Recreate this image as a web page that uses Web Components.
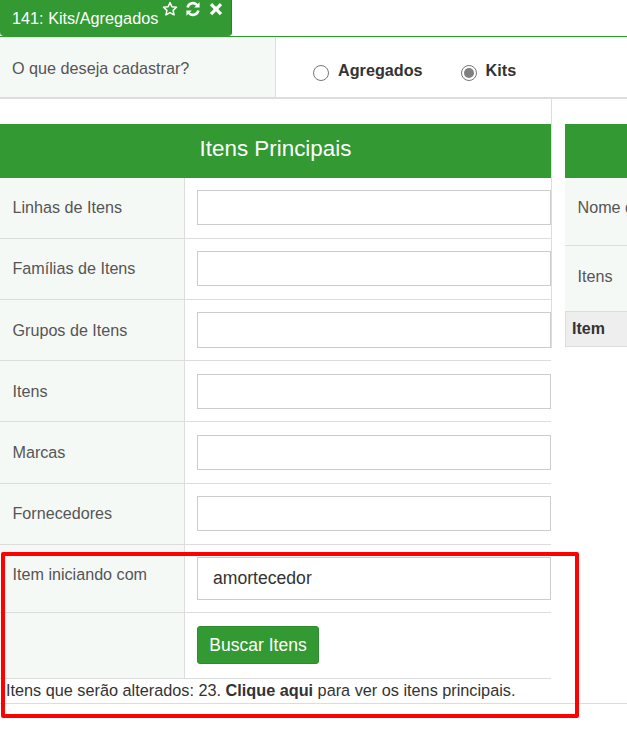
<!DOCTYPE html>
<html lang="pt"><head><meta charset="utf-8"><title>Kits/Agregados</title>
<style>
html,body{margin:0;padding:0;background:#fff;overflow:hidden;height:749px}
body{font:16px "Liberation Sans",Arial,sans-serif;color:#333;position:relative}
</style></head><body>
<kit-page></kit-page>
<script>
function el(name,html,css){
  customElements.define(name,class extends HTMLElement{
    connectedCallback(){ if(this.shadowRoot) return;
      const s=this.attachShadow({mode:'open'});
      const f=typeof html==='function'?html(this):html;
      s.innerHTML='<style>'+css+'</style>'+f;
    }
  });
}
el('kit-tab',`<span class="t">141: Kits/Agregados</span>
<span class="ic">
<svg width="16" height="16" viewBox="0 0 16 16"><path d="M8 1.6l1.9 4.2 4.6.5-3.4 3.1.95 4.5L8 11.6l-4.05 2.3.95-4.5L1.5 6.3l4.6-.5z" fill="none" stroke="#fff" stroke-width="1.5" stroke-linejoin="round"/></svg>
<svg width="16" height="16" viewBox="0 0 16 16"><path d="M2.6 6.6A5.6 5.6 0 0 1 12.4 4.2M13.4 9.4A5.6 5.6 0 0 1 3.6 11.8" fill="none" stroke="#fff" stroke-width="2.5"/><path d="M14.6 1.2v5.4H9.2zM1.4 14.8V9.4h5.4z" fill="#fff"/></svg>
<svg width="16" height="16" viewBox="0 0 16 16"><path d="M3 3.2l10 10M13 3.2l-10 10" fill="none" stroke="#fff" stroke-width="3.2"/></svg>
</span>`,`
:host{display:flex;width:232px;height:36px;box-sizing:border-box;background:#339933;color:#fff;border-radius:0 0 4px 4px;border-right:1px solid #2c7f2c;padding-left:12px;position:relative}
.t{font-size:16.25px;line-height:37px;white-space:nowrap}
.ic{display:flex;gap:7px;margin-left:4px;height:18px;align-items:center}
svg{display:block}
`);
el('kit-radio',(h)=>`<span class="r ${h.hasAttribute('checked')?'on':''}"></span><b><slot></slot></b>`,`
:host{display:inline-flex;align-items:center;gap:9px}
.r{width:16px;height:16px;box-sizing:border-box;border:1px solid #767676;border-radius:50%;background:#fff;position:relative;top:1px}
.r.on::after{content:"";position:absolute;left:2px;top:2px;width:10px;height:10px;border-radius:50%;background:#808080}
b{font-size:16.2px;color:#333;position:relative;top:-1px}
`);
el('kit-top',`<div class="l"><slot name="label"></slot></div><div class="r"><slot></slot></div>`,`
:host{display:flex;height:62px;box-sizing:border-box;border-bottom:2px solid #ddd;border-top:1px solid #e8efe8}
.l{width:276px;box-sizing:border-box;background:#f5f9f5;border-right:1px solid #ddd;padding:20px 12px 0;font-size:16.2px;color:#555;line-height:20px}
.r{display:flex;gap:38px;padding:24px 0 0 37px;align-items:flex-start}
`);
el('kit-row',(h)=>`<div class="l">${h.getAttribute('label')||''}</div><div class="r"><slot></slot></div>`,`
:host{display:grid;grid-template-columns:185px 1fr;border-bottom:1px solid #ddd;box-sizing:border-box}
.l{background:#f5f9f5;border-right:1px solid #ddd;box-sizing:border-box;padding:var(--p,18px) 12.5px 0;font-size:16.15px;line-height:22px;color:#555}
.r{padding:12px 0 0 12px;box-sizing:border-box}
`);
el('kit-input',(h)=>`<div class="b">${h.getAttribute('value')||''}</div>`,`
:host{display:block}
.b{height:35px;box-sizing:border-box;border:1px solid #ccc;background:#fff;font-size:17.6px;color:#333;padding-left:15px;line-height:40px}
:host([tall]) .b{height:43px}
:host([mid]) .b{height:36px}
`);
el('kit-button',`<slot></slot>`,`
:host{display:inline-block;width:122px;height:38px;box-sizing:border-box;background:#339933;color:#fff;border:1px solid #2d8a2d;border-radius:3px;text-align:center;font-size:17.5px;line-height:36px}
`);
el('kit-head',`<slot></slot>`,`
:host{display:block;height:54px;background:#339933;color:#fff;font-size:22.4px;line-height:50px;text-align:center}
`);
el('kit-main',`
<kit-head>Itens Principais</kit-head>
<kit-row label="Linhas de Itens" style="height:61px"><kit-input></kit-input></kit-row>
<kit-row label="Famílias de Itens" style="height:61px"><kit-input></kit-input></kit-row>
<kit-row label="Grupos de Itens" style="height:61px;--p:19px"><kit-input mid></kit-input></kit-row>
<kit-row label="Itens" style="height:61px;--p:19px"><kit-input style="margin-top:1px"></kit-input></kit-row>
<kit-row label="Marcas" style="height:62px;--p:19px"><kit-input style="margin-top:1px"></kit-input></kit-row>
<kit-row label="Fornecedores" style="height:61px"><kit-input></kit-input></kit-row>
<kit-row label="Item iniciando com" style="height:68px"><kit-input tall value="amortecedor"></kit-input></kit-row>
<kit-row label="" style="height:66px"><kit-button style="margin-top:1px">Buscar Itens</kit-button></kit-row>
<div class="note">Itens que serão alterados: 23. <b>Clique aqui</b> para ver os itens principais.</div>
`,`
:host{display:block;width:551px;padding-top:25px;box-sizing:border-box}
.note{font-size:16.25px;line-height:23px;padding-left:6px;color:#333;height:23px;white-space:nowrap}
b{color:#333}
`);
el('kit-side',`
<div class="h"></div>
<div class="c n">Nome de</div>
<div class="c i">Itens</div>
<div class="th">Item</div>
`,`
:host{display:block;flex:1;min-width:0;overflow:hidden;padding:25px 0 0 13px;box-sizing:content-box}
.h{height:54px;background:#339933}
.c{background:#f5f9f5;color:#555;font-size:16.15px;padding-left:12.5px;box-sizing:border-box;white-space:nowrap}
.n{height:68px;border-bottom:1px solid #ddd;line-height:58px}
.i{height:66px;line-height:60px}
.th{height:36px;box-sizing:border-box;background:#eee;border:1px solid #ddd;border-right:0;font-weight:bold;font-size:16px;color:#333;line-height:33px;padding-left:6px;margin-top:-1px}
`);
el('kit-highlight',``,`
:host{position:absolute;left:1px;top:552px;width:578px;height:166px;box-sizing:border-box;border:4px solid #f00;border-radius:2px;pointer-events:none}
`);
el('kit-page',`
<kit-tab></kit-tab>
<div class="line"></div>
<kit-top><span slot="label">O que deseja cadastrar?</span><kit-radio>Agregados</kit-radio><kit-radio checked>Kits</kit-radio></kit-top>
<div class="cols"><kit-main></kit-main><div class="div"></div><kit-side></kit-side></div>
<div class="end"></div>
<kit-highlight></kit-highlight>
`,`
:host{display:block;width:627px}
.line{height:1px;background:#339933}
.cols{display:flex;height:604px}
.div{width:1px;background:#ddd;flex:none;height:249px}
.end{height:1px;background:#ddd;}
`);
</script>
</body></html>
